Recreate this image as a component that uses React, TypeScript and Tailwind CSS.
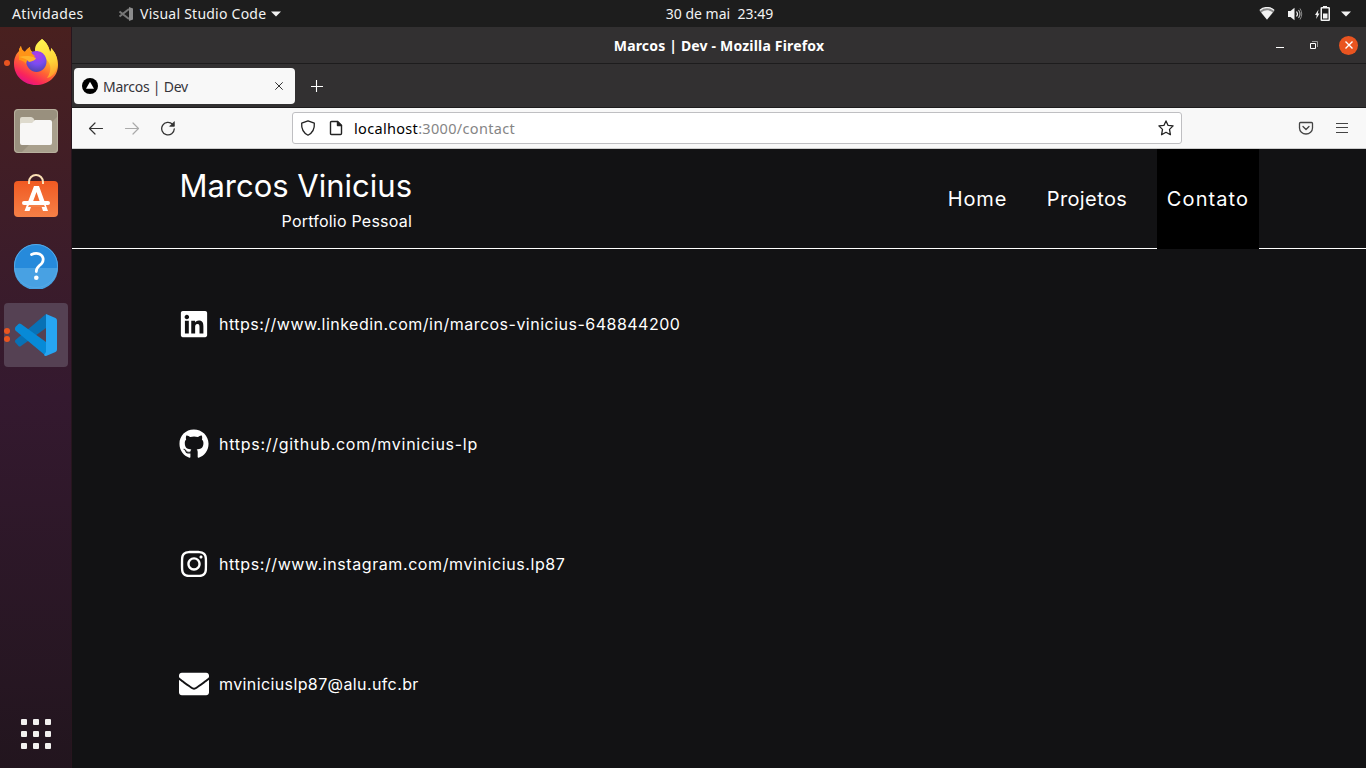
import React from "react";
import { FaLinkedin, FaGithub, FaInstagram, FaEnvelope } from "react-icons/fa";

function FirefoxIcon() {
  return (
    <svg width="46" height="48" viewBox="0 0 46 48">
      <defs>
        <linearGradient id="fx1" x1="0.8" y1="0.05" x2="0.3" y2="1">
          <stop offset="0" stopColor="#fff04a" />
          <stop offset="0.35" stopColor="#ffb52c" />
          <stop offset="0.62" stopColor="#ff6433" />
          <stop offset="0.85" stopColor="#f9245c" />
          <stop offset="1" stopColor="#e0128c" />
        </linearGradient>
        <radialGradient id="fx2" cx="0.55" cy="0.2" r="0.85">
          <stop offset="0" stopColor="#b33be8" />
          <stop offset="0.5" stopColor="#7a4cf0" />
          <stop offset="1" stopColor="#4b43a8" />
        </radialGradient>
        <linearGradient id="fx3" x1="0.5" y1="0" x2="0.7" y2="1">
          <stop offset="0" stopColor="#fff44f" />
          <stop offset="0.6" stopColor="#ffd338" />
          <stop offset="1" stopColor="#ff9a2a" />
        </linearGradient>
      </defs>
      <path d="M29 1c5 4 7 8 8 13 1-1 1-2 1-4 5 5 7 11 7 17 0 12-10 20-22 20S1 38 1 26c0-6 2-10 5-13 0-2 1-4 2-5 0 3 2 5 4 6 1-2 3-4 5-5 0 3 1 4 3 5q2 0 3-1c0-5 3-9 6-12z" fill="url(#fx1)" />
      <path d="M29 1c5 4 7 8 8 13 1-1 1-2 1-4 5 5 7 11 6 18-1 7-5 11-10 12 5-7 4-14 0-18-4-5-12-5-12-10 0-5 3-8 7-11z" fill="url(#fx3)" />
      <path d="M14 20c1-4 5-7 9-7 4 0 8 2 9.500 6 2 4 1 9-2 12-4 4-10 4-14 0-3-3-4-7-2.500-11z" fill="url(#fx2)" />
      <path d="M6 13c0-2 1-4 2-5 0 3 2 5 4 6 1-2 3-4 5-5 0 4 1 6 5 9-1 2-4 2-6 3-2 1-3 3-3 5-2-3-5-4-7-4 0-4 0-6 0-9z" fill="#ff9417" />
      <path d="M6 19c5-1 10-2 17 1-1 3-4 3-7 4-2-3-6-4-10-5z" fill="#ffb22c" />
    </svg>
  );
}

function FilesIcon() {
  return (
    <svg width="46" height="46" viewBox="0 0 46 46">
      <rect x="1" y="1" width="44" height="44" rx="4" fill="#99907e" />
      <path d="M45 8v33a4 4 0 0 1-4 4H8z" fill="#a9a08d" />
      <rect x="1.500" y="1.500" width="43" height="43" rx="3.500" fill="none" stroke="#b8b09e" />
      <path d="M7 13V11q0-2 2-2h9q1.500 0 2.500 1.500L22 13v5H7z" fill="#dedacd" />
      <path d="M7 17q0-2 2-2h10l3-3h15q2 0 2 2v21q0 2-2 2H9q-2 0-2-2z" fill="#f8f7f6" />
    </svg>
  );
}

function StoreIcon() {
  return (
    <svg width="46" height="46" viewBox="0 0 46 46">
      <defs>
        <linearGradient id="store" x1="0" y1="0" x2="0" y2="1">
          <stop offset="0" stopColor="#f05a22" />
          <stop offset="1" stopColor="#f58047" />
        </linearGradient>
      </defs>
      <rect x="1" y="8" width="44" height="36" rx="4" fill="url(#store)" />
      <path d="M16 11V9a7 7 0 0 1 14 0v2" fill="none" stroke="#fbe0b5" strokeWidth="2" />
      <path d="M21 13h5l9 25h-5l-6.500-19-7 19h-5z" fill="#fff" />
      <rect x="9" y="28" width="28" height="4" rx="2" fill="#fff" />
      <path d="M16 32h15l1 2H15z" fill="#f58047" />
    </svg>
  );
}

function HelpIcon() {
  return (
    <svg width="46" height="46" viewBox="0 0 46 46">
      <circle cx="23" cy="23" r="22" fill="#268adb" />
      <path d="M1 25h44a22 22 0 0 1-44 0z" fill="#48a1e3" />
      <circle cx="23" cy="23" r="21.500" fill="none" stroke="#55a9e6" />
      <path d="M18.500 11.500c2.500-1.200 5.500-1.500 8-.5 4 1.800 4.500 6 2.500 9-2 2.800-5.700 3.500-5.700 8.500" fill="none" stroke="#fff" strokeWidth="2.800" strokeLinecap="round" />
      <circle cx="23.300" cy="34.800" r="2.300" fill="#fff" />
    </svg>
  );
}

function CodeIcon() {
  return (
    <svg width="46" height="46" viewBox="0 0 46 46">
      <path d="M33 2v14L8 34q-1.500 1-2.500 0L2.400 30.500q-1-1.300 0-2.500z" fill="#0871b5" />
      <path d="M2.400 15L5.500 12q1-1 2.500 0l25 18v14L2.400 18.500q-1-1.500 0-3.500z" fill="#078ad7" />
      <path d="M33 2l9.500 4q1.500.8 1.500 2.500v29q0 1.800-1.500 2.500L33 44q-1.500 0-2-1l2-3z" fill="#26a5f2" />
    </svg>
  );
}

function Dock() {
  return (
    <aside className="relative flex w-[72px] shrink-0 flex-col items-center border-r border-[#27151e] bg-gradient-to-b from-[#49201f] via-[#34192f] to-[#22151e]">
      <div className="flex h-[70px] w-full items-center justify-center"><FirefoxIcon /></div>
      <div className="flex h-[68px] w-full items-center justify-center"><FilesIcon /></div>
      <div className="flex h-[68px] w-full items-center justify-center pb-[6px]"><StoreIcon /></div>
      <div className="flex h-[68px] w-full items-center justify-center pb-[2px]"><HelpIcon /></div>
      <div className="mt-[2px] flex h-16 w-16 items-center justify-center rounded bg-[#554153]"><CodeIcon /></div>
      <div className="mt-auto mb-[19px] grid grid-cols-3 gap-[6px]">
        {[0, 1, 2, 3, 4, 5, 6, 7, 8].map((n) => (
          <span key={n} className="h-[6px] w-[6px] rounded-[1px] bg-[#f2f0ef]" />
        ))}
      </div>
      <span className="absolute top-[33px] left-1 h-[6px] w-[6px] rounded-full bg-[#e95420]" />
      <span className="absolute top-[301px] left-1 h-[6px] w-[6px] rounded-full bg-[#e95420]" />
      <span className="absolute top-[309px] left-1 h-[6px] w-[6px] rounded-full bg-[#e95420]" />
    </aside>
  );
}

function TopBar() {
  return (
    <div className="grid h-[27px] shrink-0 grid-cols-[1fr_auto_1fr] items-center bg-[#1d1d1d] text-[14px] text-[#f2f2f2]">
      <div className="flex items-center pl-3">
        <span className="w-[106px] tracking-[0.35px]">Atividades</span>
        <svg width="16" height="16" viewBox="0 0 16 16" fill="none">
          <path d="M1.500 5.500L11 13M1.500 10.500L11 3" stroke="#777" strokeWidth="2" />
          <path d="M11 1l4 1.500v11L11 15z" fill="#8b8b8b" />
        </svg>
        <span className="ml-[6px] w-[127px] tracking-[0.24px] whitespace-nowrap">Visual Studio Code</span>
        <svg className="ml-1" width="10" height="6" viewBox="0 0 10 6"><path d="M0 .5h10L5 5.500z" fill="#f2f2f2" /></svg>
      </div>
      <div className="pl-[73px] whitespace-pre">30 de mai  23:49</div>
      <div className="flex items-center justify-end pr-[15px]">
        <svg width="16" height="13" viewBox="0 0 16 13">
          <path d="M.3 3.600C5-.6 11-.6 15.700 3.600L8 12.700z" fill="#8a8a8a" />
          <path d="M1 3.200C5-.3 11-.3 15 3.200" fill="none" stroke="#f2f2f2" strokeWidth="1.300" />
          <path d="M2.300 5.500C6 2.500 10 2.500 13.700 5.500L8 12.500z" fill="#f2f2f2" />
        </svg>
        <svg className="ml-3" width="16" height="14" viewBox="0 0 16 14" fill="none">
          <path d="M1 4h2.500L7.500.8v12.400L3.500 10H1z" fill="#f2f2f2" />
          <path d="M9.500 4.500q2 2.500 0 5" stroke="#f2f2f2" strokeWidth="1.200" />
          <path d="M11.500 3q3 4 0 8" stroke="#bbb" strokeWidth="1.200" />
          <path d="M13 1.500q3.500 5.500 0 11" stroke="#888" strokeWidth="1" />
        </svg>
        <svg className="ml-3" width="15" height="16" viewBox="0 0 15 16">
          <path d="M3.500 3.500L0 9h1.700L1.200 13 4.500 7.500H2.800z" fill="#f2f2f2" />
          <path d="M8 0h4v2H8z" fill="#f2f2f2" />
          <rect x="6.250" y="1.750" width="8" height="12.500" rx=".5" fill="none" stroke="#f2f2f2" strokeWidth="1.500" />
          <path d="M8 7.500h4.500v5H8z" fill="#f2f2f2" />
        </svg>
        <svg className="ml-[11px]" width="10" height="6" viewBox="0 0 10 6"><path d="M0 .5h10L5 5.500z" fill="#f2f2f2" /></svg>
      </div>
    </div>
  );
}

function BrowserChrome() {
  return (
    <div className="shrink-0">
      <div className="grid h-[37px] grid-cols-[1fr_auto_1fr] items-center border-b border-[#1d1c1d] bg-[#323031]">
        <span />
        <span className="text-[14px] font-bold tracking-[0.18px] text-white">Marcos | Dev - Mozilla Firefox</span>
        <div className="flex items-center justify-end pr-2">
          <span className="mt-1 h-px w-2 bg-white" />
          <svg className="ml-[26px]" width="8" height="8" viewBox="0 0 8 8" fill="none">
            <path d="M2 .5h5.500V6" stroke="#999" />
            <path d="M.5 2.500h5v5h-5z" stroke="#fff" />
          </svg>
          <span className="ml-[21px] flex h-[19px] w-[19px] items-center justify-center rounded-full bg-[#e95420]">
            <svg width="8" height="8" viewBox="0 0 8 8"><path d="M.5.5l7 7M7.500.5l-7 7" stroke="#fff" strokeWidth="1.400" /></svg>
          </span>
        </div>
      </div>
      <div className="flex h-11 items-center border-b border-[#1d1c1d] bg-[#323031] pl-[2px]">
        <div className="flex h-9 w-[221px] items-center rounded bg-[#f8f8f8] px-2">
          <svg width="16" height="16" viewBox="0 0 16 16"><circle cx="8" cy="8" r="8" fill="#000" /><path d="M8 3.800l4 7H4z" fill="#fff" /></svg>
          <span className="ml-[5px] pt-px text-[14px] tracking-[-0.25px] text-[#35343a]">Marcos | Dev</span>
          <svg className="mr-1 ml-auto" width="8" height="8" viewBox="0 0 8 8"><path d="M.3.300l7.400 7.400M7.700.3L.3 7.700" stroke="#333" /></svg>
        </div>
        <svg className="ml-4" width="12" height="12" viewBox="0 0 12 12"><path d="M5.500 0v12M0 6.500h12" stroke="#fff" strokeWidth="1.100" /></svg>
      </div>
      <div className="flex h-[41px] items-center border-b border-[#ccc] bg-[#f8f8f8]">
        <svg className="ml-4" width="16" height="16" viewBox="0 0 16 16" fill="none" stroke="#333" strokeWidth="1.200" strokeLinecap="round" strokeLinejoin="round"><path d="M14.500 8.500H1.500M7 3L1.500 8.500 7 14" /></svg>
        <svg className="ml-5" width="16" height="16" viewBox="0 0 16 16" fill="none" stroke="#aaa" strokeWidth="1.200" strokeLinecap="round" strokeLinejoin="round"><path d="M1.500 8.500h13M9 3L14.500 8.500 9 14" /></svg>
        <svg className="ml-5" width="16" height="16" viewBox="0 0 16 16" fill="none" stroke="#333" strokeWidth="1.300" strokeLinecap="round"><path d="M12.500 4.200A6.300 6.300 0 1 0 14.300 8.800" /><path d="M14.300 2v4.300H10z" fill="#333" strokeWidth=".8" /></svg>
        <div className="ml-[116px] flex h-8 w-[890px] items-center rounded-[3px] border border-[#bfbfc2] bg-white px-[7px]">
          <svg width="16" height="16" viewBox="0 0 16 16" fill="none" stroke="#222" strokeWidth="1.300" strokeLinejoin="round"><path d="M8 .8l6.300 2.400q.7 8.300-6.300 12-7-3.700-6.300-12z" /></svg>
          <svg className="ml-3" width="16" height="16" viewBox="0 0 16 16" fill="none" stroke="#222" strokeWidth="1.400" strokeLinejoin="round"><path d="M3.500 1.500h6L13.500 5.500v8q0 1-1 1h-9q-1 0-1-1v-11q0-1 1-1z" /><path d="M9.500 1.500v4h4z" fill="#222" /></svg>
          <span className="ml-[10px] pt-px text-[14.500px] tracking-[0.32px] text-[#858585]"><span className="text-black">localhost</span>:3000/contact</span>
          <svg className="ml-auto" width="16" height="16" viewBox="0 0 16 16" fill="none" stroke="#222" strokeWidth="1.300" strokeLinejoin="round"><path d="M8 .9l2.100 4.500 5 .5-3.600 3.500.9 5.300L8 12.300l-4.400 2.400.9-5.300L.9 5.900l5-.5z" /></svg>
        </div>
        <svg className="ml-[116px]" width="16" height="16" viewBox="0 0 16 16" fill="none" stroke="#444" strokeWidth="1.300" strokeLinecap="round" strokeLinejoin="round"><path d="M2.500 2.500h11q1 0 1 1V8a6.500 6 0 0 1-13 0V3.500q0-1 1-1zM5 6.500l3 3 3-3" /></svg>
        <svg className="ml-5" width="16" height="16" viewBox="0 0 16 16" stroke="#444" strokeWidth="1"><path d="M2 3.500h12M2 7.500h12M2 12.500h12" /></svg>
      </div>
    </div>
  );
}

const contacts = [
  { icon: FaLinkedin, text: "https://www.linkedin.com/in/marcos-vinicius-648844200", spacing: "tracking-[0.49px]" },
  { icon: FaGithub, text: "https://github.com/mvinicius-lp", spacing: "tracking-[0.72px]" },
  { icon: FaInstagram, text: "https://www.instagram.com/mvinicius.lp87", spacing: "tracking-[0.59px]" },
  { icon: FaEnvelope, text: "mviniciuslp87@alu.ufc.br", spacing: "tracking-[0.39px]" },
];

function Portfolio() {
  return (
    <main className="flex-1 bg-[#121214] font-['Inter',sans-serif] text-white">
      <header className="flex h-[100px] justify-between border-b border-white pr-[107px] pl-[107px]">
        <div className="flex w-[233px] flex-col items-end pt-[13px]">
          <h1 className="text-[31px] leading-[48px] font-normal whitespace-nowrap">Marcos Vinicius</h1>
          <p className="text-[16px] leading-[22px] tracking-[0.22px] whitespace-nowrap">Portfolio Pessoal</p>
        </div>
        <nav className="flex h-[100px] gap-5 text-[20px]">
          <a className="flex w-[79px] items-center justify-center tracking-[0.9px]">Home</a>
          <a className="flex w-[100px] items-center justify-center tracking-[0.4px]">Projetos</a>
          <a className="flex w-[102px] items-center justify-center bg-black tracking-[1.1px]">Contato</a>
        </nav>
      </header>
      <ul className="flex flex-col pt-[15px] pl-[107px]">
        {contacts.map(({ icon: Icon, text, spacing }) => (
          <li key={text} className="flex h-[120px] items-center gap-[10px]">
            <Icon size={30} />
            <span className={"text-[16px] " + spacing}>{text}</span>
          </li>
        ))}
      </ul>
    </main>
  );
}

export default function App() {
  return (
    <div className="flex h-[768px] w-[1366px] flex-col overflow-hidden bg-[#121214] font-['Noto_Sans',sans-serif]">
      <TopBar />
      <div className="flex min-h-0 flex-1">
        <Dock />
        <div className="flex min-w-0 flex-1 flex-col overflow-hidden">
          <BrowserChrome />
          <Portfolio />
        </div>
      </div>
    </div>
  );
}
